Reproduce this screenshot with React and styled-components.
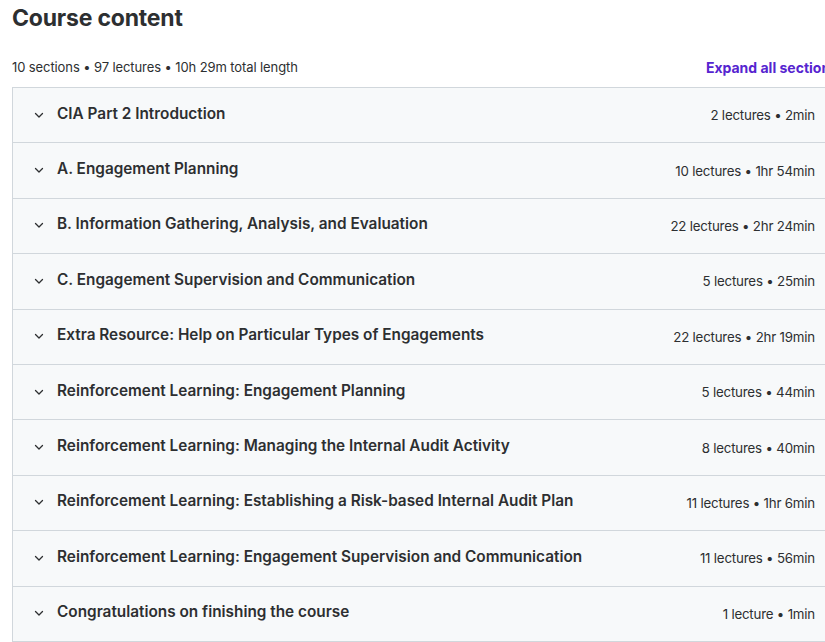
import React from 'react'
import styled, { createGlobalStyle } from 'styled-components'

const sections = [
  { title: 'CIA Part 2 Introduction', meta: '2 lectures • 2min' },
  { title: 'A. Engagement Planning', meta: '10 lectures • 1hr 54min' },
  { title: 'B. Information Gathering, Analysis, and Evaluation', meta: '22 lectures • 2hr 24min' },
  { title: 'C. Engagement Supervision and Communication', meta: '5 lectures • 25min' },
  { title: 'Extra Resource: Help on Particular Types of Engagements', meta: '22 lectures • 2hr 19min' },
  { title: 'Reinforcement Learning: Engagement Planning', meta: '5 lectures • 44min' },
  { title: 'Reinforcement Learning: Managing the Internal Audit Activity', meta: '8 lectures • 40min' },
  { title: 'Reinforcement Learning: Establishing a Risk-based Internal Audit Plan', meta: '11 lectures • 1hr 6min' },
  { title: 'Reinforcement Learning: Engagement Supervision and Communication', meta: '11 lectures • 56min' },
  { title: 'Congratulations on finishing the course', meta: '1 lecture • 1min' },
]

function Chevron() {
  return (
    <ChevronSvg viewBox="0 0 12 12" width="12" height="12">
      <path d="M2.5 4.5 L6 8 L9.5 4.5" fill="none" stroke="#2d2f31" strokeWidth="1.3" strokeLinecap="round" strokeLinejoin="round" />
    </ChevronSvg>
  )
}

export default function App() {
  return (
    <>
      <GlobalStyle />
      <Page>
        <Title>Course content</Title>
        <InfoRow>
          <Summary>10 sections • 97 lectures • 10h 29m total length</Summary>
          <ExpandLink href="#">Expand all sections</ExpandLink>
        </InfoRow>
        <Accordion>
          {sections.map((s, i) => (
            <Row key={i}>
              <Chevron />
              <RowTitle>{s.title}</RowTitle>
              <RowMeta>{s.meta}</RowMeta>
            </Row>
          ))}
        </Accordion>
      </Page>
    </>
  )
}

const GlobalStyle = createGlobalStyle`
  html, body {
    margin: 0;
    padding: 0;
    background: #fff;
    overflow: hidden;
  }
  body {
    font-family: Inter, "Noto Sans", sans-serif;
    color: #2d2f31;
  }
`

const Page = styled.div`
  width: 826px;
  padding: 4px 0 0 12px;
`

const Title = styled.h2`
  margin: 0;
  font-size: 23px;
  font-weight: 700;
  letter-spacing: -0.2px;
  line-height: 28px;
  color: #2d2f31;
`

const InfoRow = styled.div`
  display: flex;
  align-items: center;
  justify-content: space-between;
  margin-top: 23px;
  height: 24px;
  margin-bottom: 8px;
`

const Summary = styled.span`
  font-size: 13px;
  color: #2d2f31;
  letter-spacing: -0.1px;
`

const ExpandLink = styled.a`
  font-size: 14px;
  font-weight: 700;
  color: #5624d0;
  text-decoration: none;
  white-space: nowrap;
`

const Accordion = styled.div`
  border: 1px solid #d1d7dc;
  border-bottom: none;
`

const Row = styled.div`
  display: flex;
  align-items: center;
  box-sizing: border-box;
  height: 55.4px;
  padding: 0 22px 0 20px;
  background: #f7f9fa;
  border-bottom: 1px solid #d1d7dc;
`

const ChevronSvg = styled.svg`
  flex: none;
  margin-right: 12px;
  margin-bottom: 1px;
`

const RowTitle = styled.span`
  flex: 1;
  font-size: 15.35px;
  font-weight: 600;
  color: #2d2f31;
  margin-bottom: 4px;
`

const RowMeta = styled.span`
  font-size: 13.3px;
  color: #2d2f31;
  white-space: nowrap;
  letter-spacing: -0.2px;
`
